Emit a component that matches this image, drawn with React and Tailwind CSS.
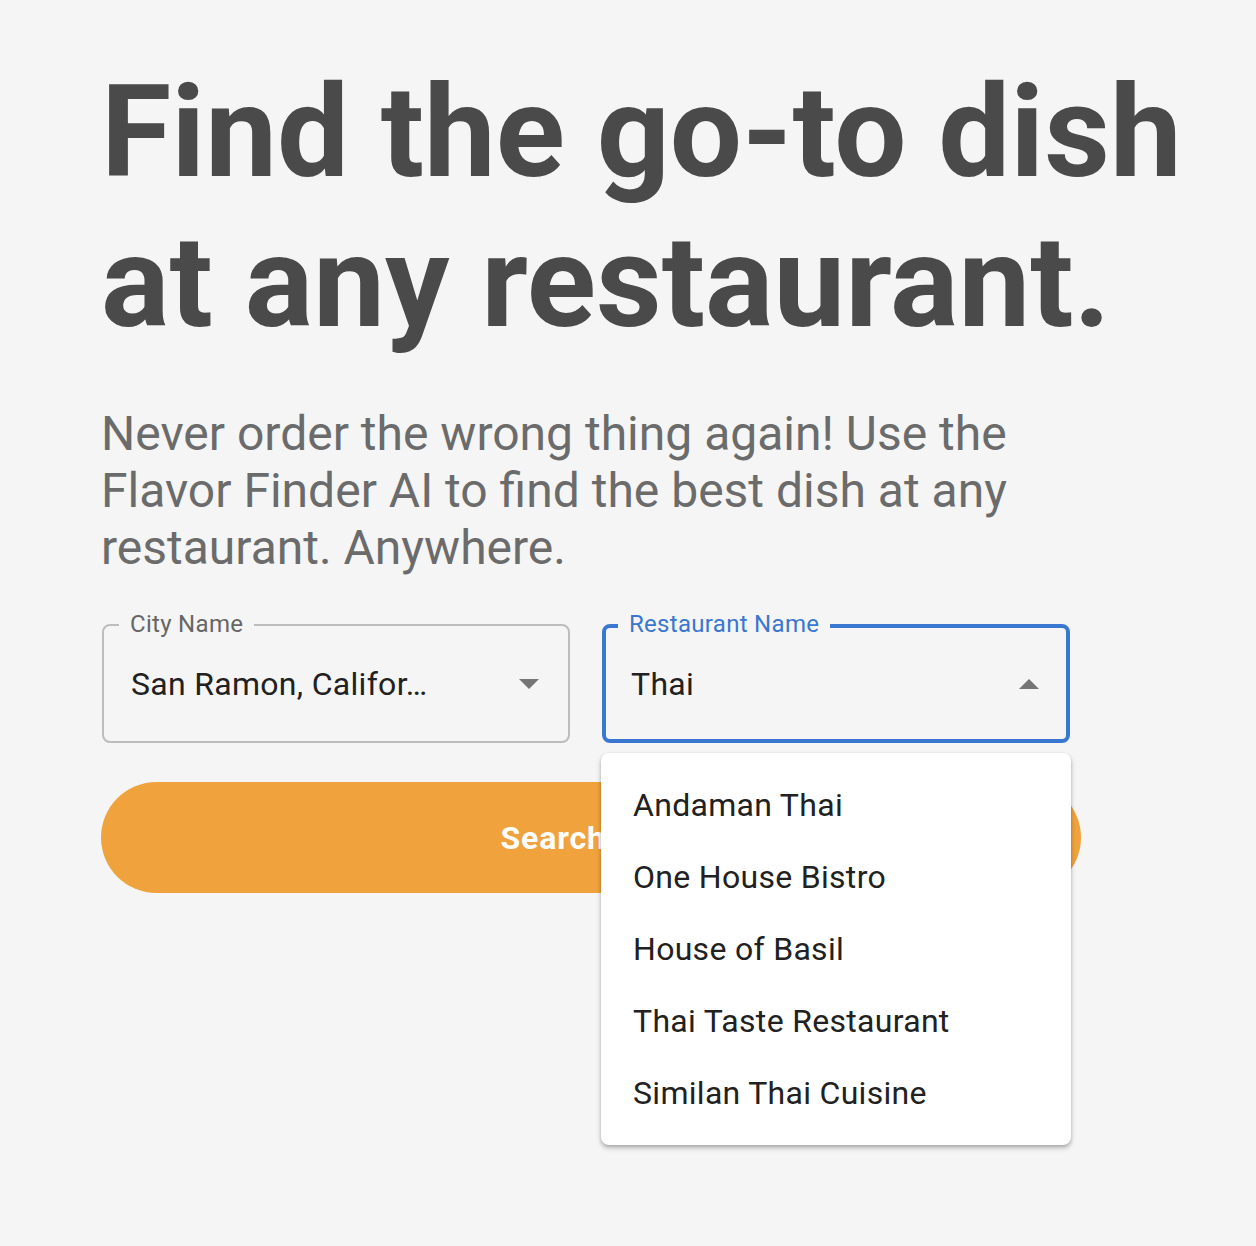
import React from "react";

const restaurants = [
  "Andaman Thai",
  "One House Bistro",
  "House of Basil",
  "Thai Taste Restaurant",
  "Similan Thai Cuisine",
];

function Caret({ up }) {
  return (
    <svg width="20" height="10" viewBox="0 0 20 10" className="shrink-0">
      {up ? (
        <path d="M0 10 L10 0 L20 10 Z" fill="#757575" />
      ) : (
        <path d="M0 0 L20 0 L10 10 Z" fill="#757575" />
      )}
    </svg>
  );
}

export default function App() {
  return (
    <div className="min-h-[1246px] bg-[#f5f5f5] pl-[101px] pt-[57px] font-['Roboto','Liberation_Sans',sans-serif]">
      <h1 className="text-[128px] font-bold leading-[150px] text-[#4a4a4a]">
        Find the go-to dish
        <br />
        at any restaurant.
      </h1>

      <p className="mt-[48px] w-[920px] text-[48px] leading-[57px] text-[#6b6b6b]">
        Never order the wrong thing again! Use the Flavor Finder AI to find the
        best dish at any restaurant. Anywhere.
      </p>

      <div className="ml-[1px] mt-[48px] flex gap-[32px] tracking-[0.3px]">
        {/* city field */}
        <div className="relative flex h-[119px] w-[468px] items-center rounded-[8px] border-2 border-[#bdbdbd] pl-[27px] pr-[29px]">
          <span className="absolute left-[15px] top-[-18px] bg-[#f5f5f5] px-[11px] text-[24px] leading-[32px] text-[#666666]">
            City Name
          </span>
          <span className="flex-1 text-[32px] text-[#212121]">San Ramon, Califor…</span>
          <Caret />
        </div>

        {/* restaurant field, focused */}
        <div className="relative flex h-[119px] w-[468px] items-center rounded-[8px] border-4 border-[#3a77d0] pl-[25px] pr-[27px]">
          <span className="absolute left-[12px] top-[-20px] bg-[#f5f5f5] px-[11px] text-[24px] leading-[32px] text-[#3a77d0]">
            Restaurant Name
          </span>
          <span className="flex-1 text-[32px] text-[#212121]">Thai</span>
          <Caret up />

          <ul className="absolute left-[-5px] top-[125px] z-10 w-[470px] rounded-[8px] bg-white py-[16px] shadow-[0_3px_5px_rgba(0,0,0,0.25),0_1px_3px_rgba(0,0,0,0.12)]">
            {restaurants.map((r) => (
              <li key={r} className="flex h-[72px] items-center pl-[32px] text-[32px] text-[#212121]">
                {r}
              </li>
            ))}
          </ul>
        </div>
      </div>

      <button className="mt-[39px] flex h-[111px] w-[980px] items-center justify-center rounded-full bg-[#f0a33d] text-[32px] font-bold tracking-[0.9px] text-white">
        Search Now
      </button>
    </div>
  );
}
